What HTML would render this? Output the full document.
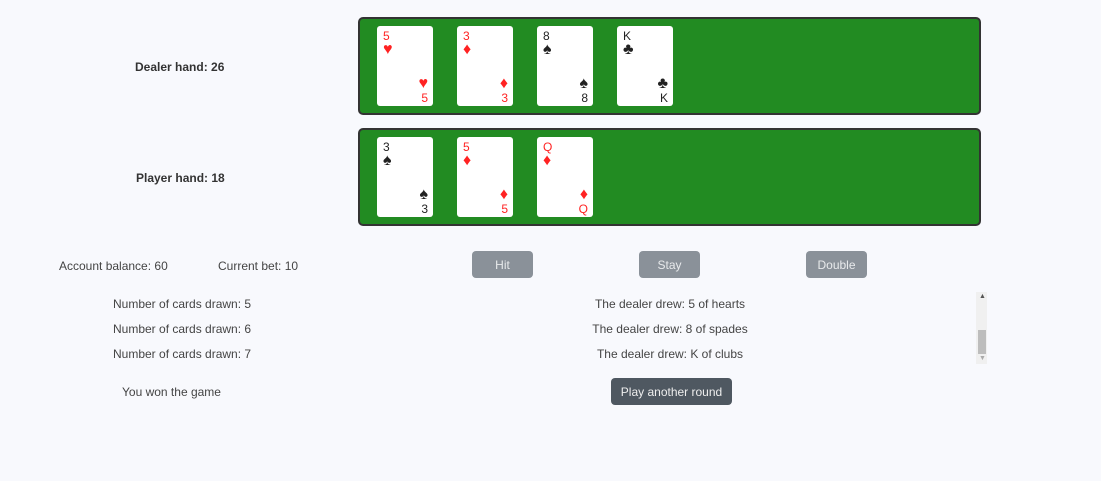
<!DOCTYPE html>
<html><head><style>
body{margin:0;width:1101px;height:481px;background:#f8f9fd;font-family:"Liberation Sans",sans-serif;color:#444;font-size:12px;position:relative;overflow:hidden}
.a{position:absolute;white-space:nowrap}
.tbl{position:absolute;left:358px;width:619px;height:94px;background:#228b22;border:2px solid #333;border-radius:5px}
.card{position:absolute;top:7px;width:56px;height:80px;background:#fff;border-radius:3px;font-size:12px}
.card .t{position:absolute;left:6px;top:3px;line-height:14px}
.card .b{position:absolute;right:5px;bottom:1px;line-height:14px;text-align:right}
.card i{font-style:normal;font-size:16px}
.r{color:#f22}.k{color:#222}
.btn{position:absolute;top:251px;width:61px;height:27px;background:#8a9199;border-radius:4px;color:#e8eaec;text-align:center;line-height:28px;font-size:12px}
.lbl{font-weight:bold;color:#333}
.c{text-align:center}
</style></head><body>
<div class="a lbl" style="left:135px;top:60px">Dealer hand: 26</div>
<div class="a lbl" style="left:136px;top:171px">Player hand: 18</div>
<div class="tbl" style="top:17px">
 <div class="card r" style="left:17px"><div class="t">5<br><i>♥</i></div><div class="b"><i>♥</i><br>5</div></div>
 <div class="card r" style="left:97px"><div class="t">3<br><i>♦</i></div><div class="b"><i>♦</i><br>3</div></div>
 <div class="card k" style="left:177px"><div class="t">8<br><i>♠</i></div><div class="b"><i>♠</i><br>8</div></div>
 <div class="card k" style="left:257px"><div class="t">K<br><i>♣</i></div><div class="b"><i>♣</i><br>K</div></div>
</div>
<div class="tbl" style="top:128px">
 <div class="card k" style="left:17px"><div class="t">3<br><i>♠</i></div><div class="b"><i>♠</i><br>3</div></div>
 <div class="card r" style="left:97px"><div class="t">5<br><i>♦</i></div><div class="b"><i>♦</i><br>5</div></div>
 <div class="card r" style="left:177px"><div class="t">Q<br><i>♦</i></div><div class="b"><i>♦</i><br>Q</div></div>
</div>
<div class="a" style="left:59px;top:259px">Account balance: 60</div>
<div class="a" style="left:218px;top:259px">Current bet: 10</div>
<div class="btn" style="left:472px">Hit</div>
<div class="btn" style="left:639px">Stay</div>
<div class="btn" style="left:806px">Double</div>
<div class="a" style="left:113px;top:297px">Number of cards drawn: 5</div>
<div class="a" style="left:113px;top:322px">Number of cards drawn: 6</div>
<div class="a" style="left:113px;top:347px">Number of cards drawn: 7</div>
<div class="a c" style="left:538px;width:264px;top:297px">The dealer drew: 5 of hearts</div>
<div class="a c" style="left:538px;width:264px;top:322px">The dealer drew: 8 of spades</div>
<div class="a c" style="left:538px;width:264px;top:347px">The dealer drew: K of clubs</div>
<div class="a" style="left:976px;top:292px;width:11px;height:72px;background:#f0f0f0"></div>
<div class="a" style="left:978px;top:330px;width:8px;height:24px;background:#bdbdbd"></div>
<div class="a" style="left:979px;top:293px;font-size:7px;color:#555">▲</div>
<div class="a" style="left:979px;top:355px;font-size:7px;color:#aaa">▼</div>
<div class="a" style="left:122px;top:385px">You won the game</div>
<div class="a" style="left:611px;top:378px;width:121px;height:27px;background:#4f5861;border-radius:4px;color:#eee;text-align:center;line-height:28px">Play another round</div>
</body></html>
